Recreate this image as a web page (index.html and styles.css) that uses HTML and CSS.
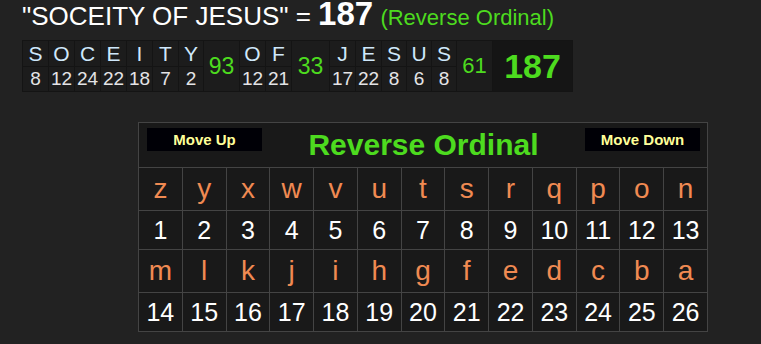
FILE: index.html
```html
<!DOCTYPE html>
<html>
<head>
<meta charset="utf-8">
<link rel="stylesheet" href="styles.css">
</head>
<body>
<div class="page">
  <h1 class="title">"SOCEITY OF JESUS" = <b class="total">187</b> <span class="cipher">(Reverse Ordinal)</span></h1>

  <div class="breakdown">
    <div class="lt"><span class="ch">S</span><span class="nv">8</span></div>
    <div class="lt"><span class="ch">O</span><span class="nv">12</span></div>
    <div class="lt"><span class="ch">C</span><span class="nv">24</span></div>
    <div class="lt"><span class="ch">E</span><span class="nv">22</span></div>
    <div class="lt"><span class="ch">I</span><span class="nv">18</span></div>
    <div class="lt"><span class="ch">T</span><span class="nv">7</span></div>
    <div class="lt nar"><span class="ch">Y</span><span class="nv">2</span></div>
    <div class="sum">93</div>
    <div class="lt"><span class="ch">O</span><span class="nv">12</span></div>
    <div class="lt"><span class="ch">F</span><span class="nv">21</span></div>
    <div class="sum wide">33</div>
    <div class="lt"><span class="ch">J</span><span class="nv">17</span></div>
    <div class="lt"><span class="ch">E</span><span class="nv">22</span></div>
    <div class="lt nar"><span class="ch">S</span><span class="nv">8</span></div>
    <div class="lt nar"><span class="ch">U</span><span class="nv">6</span></div>
    <div class="lt nar"><span class="ch">S</span><span class="nv">8</span></div>
    <div class="sum small">61</div>
    <div class="grand">187</div>
  </div>

  <div class="chart">
    <div class="chart-head">
      <button class="mv">Move Up</button>
      <span class="chart-title">Reverse Ordinal</span>
      <button class="mv">Move Down</button>
    </div>
    <div class="c l">z</div><div class="c l">y</div><div class="c l">x</div><div class="c l">w</div><div class="c l">v</div><div class="c l">u</div><div class="c l">t</div><div class="c l">s</div><div class="c l">r</div><div class="c l">q</div><div class="c l">p</div><div class="c l">o</div><div class="c l">n</div>
    <div class="c n">1</div><div class="c n">2</div><div class="c n">3</div><div class="c n">4</div><div class="c n">5</div><div class="c n">6</div><div class="c n">7</div><div class="c n">8</div><div class="c n">9</div><div class="c n">10</div><div class="c n">11</div><div class="c n">12</div><div class="c n">13</div>
    <div class="c l">m</div><div class="c l">l</div><div class="c l">k</div><div class="c l">j</div><div class="c l">i</div><div class="c l">h</div><div class="c l">g</div><div class="c l">f</div><div class="c l">e</div><div class="c l">d</div><div class="c l">c</div><div class="c l">b</div><div class="c l">a</div>
    <div class="c n">14</div><div class="c n">15</div><div class="c n">16</div><div class="c n">17</div><div class="c n">18</div><div class="c n">19</div><div class="c n">20</div><div class="c n">21</div><div class="c n">22</div><div class="c n">23</div><div class="c n">24</div><div class="c n">25</div><div class="c n">26</div>
  </div>
</div>
</body>
</html>
```

FILE: styles.css
```css
html, body {
  margin: 0;
  padding: 0;
  background: #222222;
}

.page {
  padding: 1px 0 0 22px;
  font-family: "Liberation Sans", Arial, sans-serif;
}

.title {
  margin: 0;
  height: 28px;
  font-size: 26px;
  line-height: 26px;
  font-weight: normal;
  color: #ffffff;
  white-space: nowrap;
}

.total {
  display: inline-block;
  font-size: 33px;
  line-height: 26px;
  font-weight: bold;
  color: #ffffff;
}

.cipher {
  font-size: 22px;
  color: #4ddb1f;
}

.breakdown {
  margin-top: 11px;
  display: flex;
  gap: 1px;
  padding: 1px;
  width: max-content;
  background: #141414;
}

.lt {
  display: flex;
  flex-direction: column;
  gap: 1px;
  width: 25px;
}

.lt.nar {
  width: 24px;
}

.lt span {
  display: block;
  background: #1c1c1c;
  text-align: center;
  white-space: nowrap;
}

.ch {
  height: 25px;
  line-height: 25px;
  font-size: 21px;
  color: #cfe8fb;
}

.nv {
  height: 24px;
  line-height: 24px;
  font-size: 19px;
  color: #e4e4e6;
}

.sum {
  width: 35px;
  display: flex;
  align-items: center;
  justify-content: center;
  background: #1c1c1c;
  color: #4ddb1f;
  font-size: 23px;
}

.sum.wide {
  width: 37px;
}

.sum.small {
  font-size: 22px;
}

.grand {
  width: 79px;
  display: flex;
  align-items: center;
  justify-content: center;
  background: #151515;
  color: #4ddb1f;
  font-size: 34px;
  font-weight: bold;
}

.chart {
  margin: 30px 0 0 116px;
  width: 570px;
  box-sizing: border-box;
  display: grid;
  grid-template-columns: repeat(13, 1fr);
  grid-template-rows: 44px 42px 38px 42px 38px;
  gap: 1px;
  padding: 1px;
  background: #444444;
}

.chart-head {
  grid-column: 1 / -1;
  background: #191919;
  display: flex;
  justify-content: space-between;
  align-items: center;
  padding: 0 7px 0 8px;
}

.mv {
  align-self: flex-start;
  margin-top: 5px;
  width: 115px;
  height: 23px;
  padding: 0;
  border: none;
  background: #000006;
  color: #ffff99;
  font-family: "Liberation Sans", Arial, sans-serif;
  font-size: 15px;
  font-weight: bold;
}

.chart-title {
  color: #4ddb1f;
  font-size: 30px;
  font-weight: bold;
}

.c {
  background: #191919;
  display: flex;
  align-items: center;
  justify-content: center;
}

.c.l {
  color: #f08a52;
  font-size: 28px;
}

.c.n {
  color: #ffffff;
  font-size: 25px;
}
```
